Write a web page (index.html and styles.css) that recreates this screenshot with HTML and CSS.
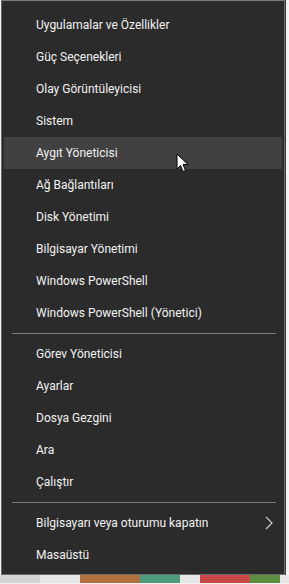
FILE: index.html
```html
<!DOCTYPE html>
<html lang="tr">
<head>
<meta charset="utf-8">
<link rel="stylesheet" href="styles.css">
</head>
<body>
<div class="page">
  <div class="menu">
    <div class="item">Uygulamalar ve Özellikler</div>
    <div class="item">Güç Seçenekleri</div>
    <div class="item">Olay Görüntüleyicisi</div>
    <div class="item">Sistem</div>
    <div class="item hover">Aygıt Yöneticisi</div>
    <div class="item">Ağ Bağlantıları</div>
    <div class="item">Disk Yönetimi</div>
    <div class="item">Bilgisayar Yönetimi</div>
    <div class="item">Windows PowerShell</div>
    <div class="item">Windows PowerShell (Yönetici)</div>
    <div class="sep"></div>
    <div class="item">Görev Yöneticisi</div>
    <div class="item">Ayarlar</div>
    <div class="item">Dosya Gezgini</div>
    <div class="item">Ara</div>
    <div class="item">Çalıştır</div>
    <div class="sep"></div>
    <div class="item sub">Bilgisayarı veya oturumu kapatın
      <svg class="chev" width="8" height="14" viewBox="0 0 8 14"><path d="M1 1 L7 7 L1 13" fill="none" stroke="#cfcfcf" stroke-width="1.2"/></svg>
    </div>
    <div class="item">Masaüstü</div>
  </div>
  <div class="side"></div>
</div>
<div class="taskbar">
  <span class="tb t1"></span><span class="tb t2"></span><span class="tb t3"></span><span class="tb t4"></span><span class="tb t5"></span>
</div>
<svg class="cursor" width="14" height="21" viewBox="0 0 14 21"><path d="M1 1 L1 16 L4.5 12.5 L7 18.5 L9.5 17.5 L7 11.5 L12 11.5 Z" fill="#fff" stroke="#000" stroke-width="1"/></svg>
</body>
</html>
```
FILE: styles.css
```css
html, body { margin: 0; padding: 0; }
body {
  background: #f2f2f2;
  width: 289px;
  height: 584px;
  overflow: hidden;
  position: relative;
  font-family: "Roboto", "Lato", sans-serif;
}
.page { display: flex; }
.menu {
  margin-left: 1px;
  width: 284px;
  box-sizing: border-box;
  border: 1px solid #6a6a6a;
  border-top-color: #7a7a7a;
  background: #2b2b2b;
  padding: 8px 2px 3px 2px;
}
.item {
  height: 32px;
  display: flex;
  align-items: center;
  padding-left: 32px;
  color: #f2f2f2;
  font-size: 12px;
  position: relative;
}
.item.hover { background: #414141; }
.sep { height: 9px; display: flex; align-items: center; padding: 0 6px 0 8px; }
.sep::before { content: ""; flex: 1; height: 1px; background: #7b7b7b; }
.chev { position: absolute; right: 9px; top: 9px; }
.side { flex: 1; background: #f4f4f4; border-left: 1px solid #3a3a3a; }
.taskbar { height: 8px; background: #e6e6e6; display: flex; }
.tb { height: 8px; display: block; }
.t1 { width: 40px; background: #d4d4d4; }
.t2 { width: 60px; background: #b27040; margin-left: 40px; }
.t3 { width: 40px; background: #4f9a7a; }
.t4 { width: 50px; background: #c84848; margin-left: 20px; }
.t5 { width: 30px; background: #5b8f3d; }
.cursor { position: absolute; left: 176px; top: 153px; }
```
